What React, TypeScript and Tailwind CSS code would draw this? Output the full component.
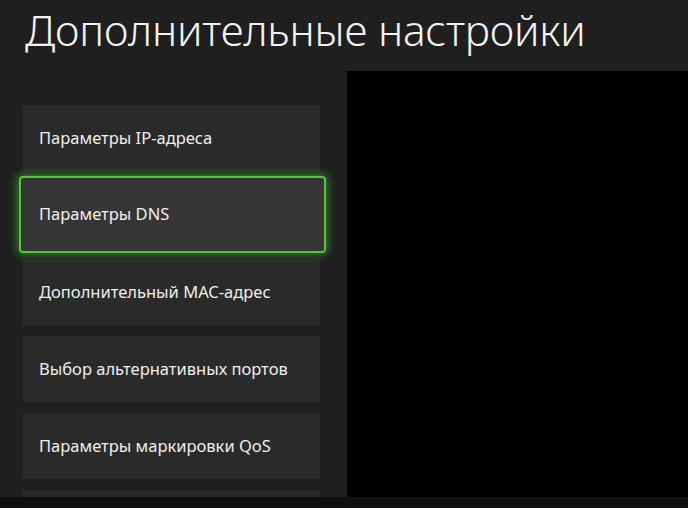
import React from "react";

const items = [
  "Параметры IP-адреса",
  "Параметры DNS",
  "Дополнительный MAC-адрес",
  "Выбор альтернативных портов",
  "Параметры маркировки QoS",
  "",
];

export default function App() {
  return (
    <div
      className="relative w-[688px] h-[508px] overflow-hidden bg-[#1f1f1f] text-white"
      style={{ fontFamily: '"Noto Sans", "Open Sans", sans-serif' }}
    >
      <h1 className="absolute left-[25px] top-[1px] text-[42.5px] font-light leading-[58px] tracking-[-0.2px] text-[#f2f2f2]">
        Дополнительные настройки
      </h1>
      <div className="flex h-[497px] pt-[71px]">
        <div className="w-[347px] flex flex-col gap-[11px] pt-[34px] pl-[23px] pr-[27px] overflow-hidden">
          {items.map((t, i) =>
            i === 1 ? (
              <div key={i} className="relative shrink-0 h-[66px]">
                <div className="absolute -top-[6px] -bottom-[5px] -left-[4px] -right-[6px] rounded-[4px] border-[2px] border-[#55c240] bg-[#353535] shadow-[0_0_9px_2px_rgba(70,200,50,0.55)] flex items-center pl-[18px] text-[16.5px] text-[#f0f0f0]">
                  {t}
                </div>
              </div>
            ) : (
              <div
                key={i}
                className="shrink-0 h-[66px] bg-[#2a2a2a] flex items-center pl-[16px] text-[16.5px] text-[#eeeeee]"
              >
                {t}
              </div>
            )
          )}
        </div>
        <div className="flex-1 bg-black" />
      </div>
      <div className="h-[11px] bg-[#0f0f0f]" />
    </div>
  );
}
